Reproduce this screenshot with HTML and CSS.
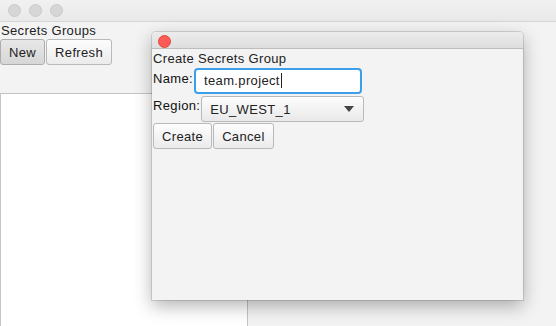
FILE: index.html
```html
<!DOCTYPE html>
<html lang="en">
<head>
    <meta charset="utf-8" />
    <title>Secrets Groups</title>
    <link rel="stylesheet" href="styles.css">
</head>
<body>
    <div id="main-window">
        <div class="titlebar">
            <span class="light"></span>
            <span class="light"></span>
            <span class="light"></span>
        </div>
        <div class="caption">Secrets Groups</div>
        <div class="toolbar">
            <button class="fx-button armed">New</button>
            <button class="fx-button">Refresh</button>
        </div>
        <div class="group-list"></div>
    </div>

    <div id="dialog">
        <div class="dialog-titlebar">
            <span class="light close"></span>
        </div>
        <div class="dialog-body">
            <div class="caption">Create Secrets Group</div>
            <div class="form-row">
                <label class="field-label" for="groupName">Name:</label>
                <div class="text-field" id="groupName">team.project<span class="caret"></span></div>
            </div>
            <div class="form-row">
                <label class="field-label">Region:</label>
                <div class="combo-box">
                    <span>EU_WEST_1</span>
                    <span class="arrow"></span>
                </div>
            </div>
            <div class="form-row">
                <button class="fx-button">Create</button>
                <button class="fx-button">Cancel</button>
            </div>
        </div>
    </div>
</body>
</html>
```

FILE: styles.css
```css
body {
    margin: 0;
    width: 556px;
    height: 326px;
    overflow: hidden;
    background: #f3f3f3;
    font-family: "Liberation Sans", Arial, sans-serif;
    font-size: 13px;
    letter-spacing: 0.35px;
    color: #222;
}

#main-window {
    display: flex;
    flex-direction: column;
    height: 100%;
}

.titlebar {
    height: 21px;
    border-bottom: 1px solid #d6d6d6;
    background: linear-gradient(#f1f1f1, #e9e9e9);
    display: flex;
    align-items: center;
    gap: 8px;
    padding-left: 8px;
}

.light {
    width: 11px;
    height: 11px;
    border-radius: 50%;
    background: #d6d6d6;
    border: 0.5px solid #cacaca;
}

    .light.close {
        background: #fc5b57;
        border-color: #e2463f;
    }

.caption {
    height: 17px;
    line-height: 17px;
    padding-left: 1px;
    white-space: nowrap;
}

.toolbar {
    display: flex;
    gap: 1px;
}

.fx-button {
    height: 26px;
    padding: 0 8px;
    margin: 0;
    font-family: inherit;
    font-size: 13px;
    letter-spacing: 0.35px;
    color: #222;
    border: 1px solid #b9b9b9;
    border-radius: 3px;
    background: linear-gradient(#fdfdfd, #ebebeb);
}

    .fx-button.armed {
        background: linear-gradient(#e8e8e8, #d6d6d6);
        border-color: #adadad;
    }

.group-list {
    margin-top: 28px;
    width: 246px;
    flex: 1;
    background: #fff;
    border: 1px solid #c4c4c4;
    border-bottom: none;
}

#dialog {
    position: absolute;
    left: 152px;
    top: 32px;
    width: 371px;
    height: 268px;
    background: #f3f3f3;
    border-radius: 4px 4px 0 0;
    box-shadow: 0 0 0 1px rgba(0, 0, 0, 0.12), 0 6px 18px rgba(0, 0, 0, 0.3);
    display: flex;
    flex-direction: column;
}

.dialog-titlebar {
    height: 16px;
    border-bottom: 1px solid #bdbdbd;
    border-radius: 4px 4px 0 0;
    background: linear-gradient(#ececec, #dedede);
    display: flex;
    align-items: flex-end;
    padding-left: 6px;
}

.dialog-body {
    display: flex;
    flex-direction: column;
    gap: 1px;
    padding: 1px 0 0 1px;
}

    .dialog-body .caption {
        padding-left: 0;
    }

.form-row {
    display: flex;
    align-items: flex-start;
    gap: 1px;
}

.field-label {
    line-height: 17px;
    padding-top: 2px;
    color: #111;
}

.text-field {
    box-sizing: border-box;
    width: 168px;
    height: 26px;
    padding: 0 8px;
    line-height: 22px;
    background: #fff;
    border: 2px solid #3d9fea;
    border-radius: 4px;
    color: #222;
}

.caret {
    display: inline-block;
    width: 1px;
    height: 15px;
    margin-left: 1px;
    vertical-align: -3px;
    background: #222;
}

.combo-box {
    box-sizing: border-box;
    width: 163px;
    height: 26px;
    margin-top: 1px;
    padding: 0 8px;
    display: flex;
    align-items: center;
    justify-content: space-between;
    border: 1px solid #b9b9b9;
    border-radius: 3px;
    background: linear-gradient(#fdfdfd, #e9e9e9);
}

.arrow {
    width: 0;
    height: 0;
    border-left: 5px solid transparent;
    border-right: 5px solid transparent;
    border-top: 6px solid #444;
    margin-right: 1px;
}
```
